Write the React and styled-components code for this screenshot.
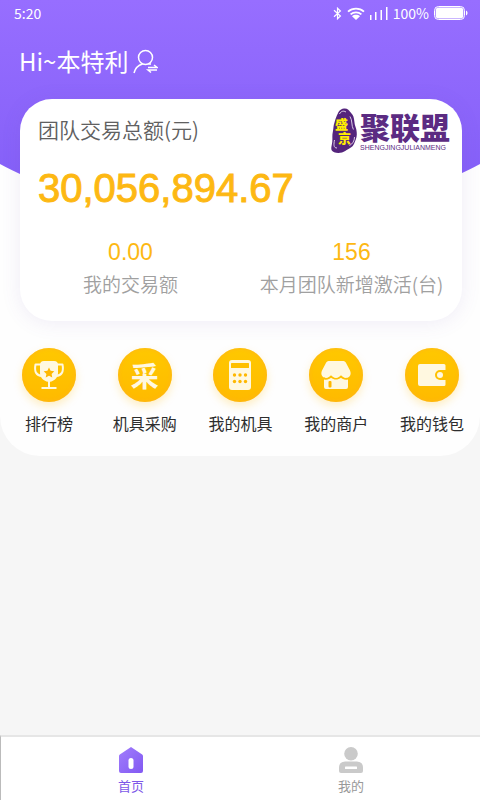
import React from 'react'
import styled, { createGlobalStyle } from 'styled-components'

const GlobalStyle = createGlobalStyle`
  * {
    box-sizing: border-box;
  }

  body {
    margin: 0;
    background: #f6f6f6;
    font-family: "Noto Sans CJK SC", "Noto Sans", sans-serif;
  }
`

const Page = styled.div`
  display: flex;
  flex-direction: column;
  min-height: 100vh;
`

const Panel = styled.div`
  position: relative;
  background: #fefefe;
  border-radius: 0 0 40px 40px;
  padding-bottom: 20px;
`

const Backdrop = styled.div`
  position: absolute;
  top: 0;
  left: 0;
  right: 0;
  height: 220px;
  background: linear-gradient(#976eff, #8560f8 180px);
  clip-path: ellipse(75% 100% at 50% 0);
`

const StatusBar = styled.div`
  position: relative;
  display: flex;
  align-items: center;
  justify-content: space-between;
  height: 26px;
  padding: 0 12px 0 14px;
  color: #fff;
  font-size: 14px;
`

const StatusIcons = styled.div`
  display: flex;
  align-items: center;
  gap: 5px;
`

const Header = styled.header`
  position: relative;
  display: flex;
  align-items: center;
  gap: 5px;
  height: 70px;
  padding: 0 19px;
  color: #fff;
`

const Greeting = styled.h1`
  margin: 0;
  font-size: 24px;
  font-weight: 400;
  line-height: 36px;
`

const IconButton = styled.button`
  display: flex;
  padding: 0;
  border: 0;
  background: none;
  color: inherit;
  cursor: pointer;
`

const Card = styled.section`
  position: relative;
  margin: 3px 18px 0 20px;
  padding: 9px 0 23px;
  border-radius: 32px;
  background: #fff;
  box-shadow: 0 2px 20px rgba(110, 80, 180, 0.1);
`

const CardTop = styled.div`
  display: flex;
  align-items: flex-start;
  justify-content: space-between;
  padding: 0 12px 0 18px;
`

const Total = styled.div`
  padding-top: 6px;
`

const TotalLabel = styled.div`
  color: #606060;
  font-size: 21px;
  font-weight: 350;
  line-height: 30px;
`

const Amount = styled.div`
  margin-top: 20px;
  color: #fdb813;
  font-family: "Liberation Sans", Arial, sans-serif;
  font-size: 40px;
  line-height: 48px;
  white-space: nowrap;
  -webkit-text-stroke: 1px #fdb813;
`

const Brand = styled.div`
  display: flex;
  gap: 2px;
`

const BrandName = styled.div`
  font-size: 30px;
  font-weight: 900;
  line-height: 36px;
  white-space: nowrap;
`

const BrandText = styled.div`
  color: #5b2b82;
`

const BrandLatin = styled.div`
  font-family: "Liberation Sans", Arial, sans-serif;
  font-size: 7px;
  line-height: 8px;
  white-space: nowrap;
`

const Stats = styled.div`
  display: grid;
  grid-template-columns: 1fr 1fr;
  margin-top: 26px;
  text-align: center;
`

const StatValue = styled.div`
  color: #fdb813;
  font-family: "Liberation Sans", Arial, sans-serif;
  font-size: 23px;
  line-height: 28px;
`

const StatLabel = styled.div`
  margin-top: 4px;
  color: #a0a0a0;
  font-size: 19px;
  font-weight: 350;
  line-height: 28px;
  white-space: nowrap;
`

const Menu = styled.nav`
  position: relative;
  display: grid;
  grid-template-columns: repeat(5, 1fr);
  margin-top: 27px;
  padding-left: 1px;
`

const MenuItem = styled.a`
  display: flex;
  flex-direction: column;
  align-items: center;
  gap: 8px;
  color: #2d2d2d;
  font-size: 16px;
  line-height: 26px;
  text-decoration: none;
  white-space: nowrap;
`

const Disc = styled.span`
  display: flex;
  align-items: center;
  justify-content: center;
  width: 54px;
  height: 54px;
  border-radius: 50%;
  background: linear-gradient(#ffc800, #ffba00);
  box-shadow: 0 4px 8px rgba(255, 190, 20, 0.25), inset 0 0 4px #ffb31c;
  color: #fff8e0;
`

const DiscGlyph = styled.span`
  font-size: 28px;
  font-weight: 700;
  line-height: 28px;
`

const TabBar = styled.nav`
  display: grid;
  grid-template-columns: 1fr 1fr;
  height: 65px;
  margin-top: auto;
  padding: 0 19px 0 20px;
  border-top: 2px solid #e6e6e6;
  border-left: 1px solid #bbb;
  background: #fff;
`

const Tab = styled.a`
  display: flex;
  flex-direction: column;
  align-items: center;
  gap: 3px;
  padding-top: 10px;
  color: ${(props) => (props.$active ? '#7d58e8' : '#999')};
  font-size: 13px;
  line-height: 20px;
  text-decoration: none;
`

const BluetoothIcon = () => (
  <svg width="9" height="13" viewBox="0 0 9 13" fill="none" stroke="currentColor" strokeWidth="1.2">
    <path d="M1 3.2 7.400 9 4.500 11.800V1.200L7.400 4 1 9.800" />
  </svg>
)

const WifiIcon = () => (
  <svg width="18" height="13" viewBox="0 0 18 13" fill="none" stroke="currentColor" strokeWidth="1.8">
    <path d="M1 4.6C5.6.5 12.4.5 17 4.6" />
    <path d="M3.600 7.400c3.100-2.800 7.700-2.800 10.800 0" />
    <path d="M5 9.200c2.200-1.900 5.800-1.900 8 0L9 13Z" fill="currentColor" stroke="none" />
  </svg>
)

const SignalIcon = () => (
  <svg width="18" height="13" viewBox="0 0 18 13" fill="currentColor">
    <rect x="0" y="8" width="1.500" height="5" />
    <rect x="5" y="5" width="1.500" height="8" />
    <rect x="10.500" y="3" width="1.500" height="10" />
    <rect x="16" y="0" width="1.500" height="13" />
  </svg>
)

const BatteryIcon = () => (
  <svg width="34" height="14" viewBox="0 0 34 14">
    <rect x="0.500" y="0.500" width="30" height="13" rx="4" fill="none" stroke="currentColor" />
    <rect x="1.700" y="1.500" width="27.600" height="11" rx="3" fill="currentColor" />
    <path d="M32 4.500c2 .8 2 4.200 0 5Z" fill="currentColor" />
  </svg>
)

const SwitchUserIcon = () => (
  <svg width="25" height="25" viewBox="0 0 25 25" fill="none" stroke="currentColor" strokeWidth="1.500">
    <circle cx="12.500" cy="8.500" r="7" />
    <path d="M1 24C2.200 19.200 5.200 16.200 9.500 15M15.500 15h2.500" />
    <path d="M15 18.500h9l-3-2.500M24 21h-9l3 2.500" />
  </svg>
)

const SealLogo = () => (
  <svg width="28" height="48" viewBox="0 0 28 48">
    <path
      d="M14 .5C17 0 19 2 21.500 5.500c2.500 3 2.500 5 3 9 .3 4 2.500 6 2.300 12-.1 4-1.400 5.500-2.600 9-2 4.500-5 4.500-9 7.500-4 2.800-12 2.500-13.700-1-.7-2.500.5-5 .8-8.500.4-3.500-.4-6 .6-10 .7-3.200.4-6 1.600-9C6 9.500 6.500 8 8.500 4 10 1.800 12 .8 14 .5Z"
      fill="#54247c"
    />
    <path d="M9.500 6c1.500-3 4-3.500 6.500-2M20 8.500c2.600 4 1.200 9 3.400 13M4.500 32c-.7 4-1.300 8 2.500 8M24.500 29c0 4-2 7-5 8.500" fill="none" stroke="#e8dff0" strokeWidth="0.900" />
    <text x="5" y="21" fontSize="13" fontWeight="900" fill="#ffed00">盛</text>
    <text x="8" y="35" fontSize="13" fontWeight="900" fill="#ffed00">京</text>
  </svg>
)

const TrophyIcon = () => (
  <svg width="32" height="30" viewBox="0 0 32 30">
    <path d="M8 4.500H2.500C1 12 3.500 15.500 9 16M24 4.500h5.500C31 12 28.500 15.500 23 16" fill="none" stroke="currentColor" strokeWidth="2" strokeLinejoin="round" />
    <path d="M11 1h10q4 0 4 4v8c0 5-4 8-8 8.800V27h6.500v2h-15v-2H15v-5.200C11 21 7 18 7 13V5q0-4 4-4Z" fill="currentColor" />
    <path d="m16 7.500 1.600 3.300 3.700.5-2.700 2.600.7 3.600-3.300-1.700-3.300 1.700.7-3.600-2.700-2.600 3.700-.5Z" fill="#ffb800" />
  </svg>
)

const TerminalIcon = () => (
  <svg width="22" height="30" viewBox="0 0 22 30">
    <rect width="22" height="30" rx="3" fill="currentColor" />
    <rect x="2" y="3" width="18" height="5" rx="0.500" fill="#ffc000" />
    {[15, 21.5].map((y) =>
      [5.5, 11, 16.5].map((x) => <circle key={`${x}-${y}`} cx={x} cy={y} r="1.700" fill="#ffb800" />)
    )}
  </svg>
)

const ShopIcon = () => (
  <svg width="30" height="30" viewBox="0 0 30 30">
    <path d="M7.500 1h15q1.500 0 2.300 1.500L29 10.500C31 15 28 18 25 18c-2.300 0-3.500-1.500-5-2.700-1.500 1.200-2.700 2.700-5 2.700s-3.500-1.500-5-2.700C8.500 16.500 7.300 18 5 18c-3 0-6-3-4-7.500l4.200-8Q6 1 7.500 1Z" fill="currentColor" />
    <path d="M3 19.500c3.500.8 5.500-.4 7-1.700 3 2.400 7 2.400 10 0 1.500 1.300 3.500 2.500 7 1.700V27q0 2-2 2H5q-2 0-2-2Z" fill="currentColor" />
    <rect x="7.500" y="21" width="3" height="6.500" rx="1" fill="#ffb800" />
  </svg>
)

const WalletIcon = () => (
  <svg width="28" height="22" viewBox="0 0 28 22">
    <path d="M2 0h24q1.500 0 1.500 1.500V6H22a5 5 0 0 0 0 10h5.500v4.500Q27.500 22 26 22H2q-2 0-2-2V2q0-2 2-2Z" fill="currentColor" />
    <circle cx="22" cy="11" r="3" fill="currentColor" />
  </svg>
)

const HomeIcon = () => (
  <svg width="24" height="26" viewBox="0 0 24 26">
    <defs>
      <linearGradient id="home" x1="0" y1="0" x2="1" y2="1">
        <stop offset="0" stopColor="#a17dfc" />
        <stop offset="1" stopColor="#8259f2" />
      </linearGradient>
    </defs>
    <path d="M12 0 23.200 7.500Q24 8 24 9v15q0 2-2 2H2q-2 0-2-2V9q0-1 .8-1.500Z" fill="url(#home)" />
    <rect x="9.500" y="11" width="5" height="11" rx="2.500" fill="#fff" />
  </svg>
)

const UserIcon = () => (
  <svg width="24" height="26" viewBox="0 0 24 26">
    <circle cx="12" cy="6.800" r="6.800" fill="#cacaca" />
    <path d="M6 14.500h12q6 0 6 6.500v3q0 2-2 2H2q-2 0-2-2v-3q0-6.500 6-6.500Z" fill="#cacaca" />
    <rect x="6" y="19.500" width="12" height="2.500" rx="0.500" fill="#fff" />
  </svg>
)

const stats = [
  { value: '0.00', label: '我的交易额' },
  { value: '156', label: '本月团队新增激活(台)' },
]

const menu = [
  { label: '排行榜', icon: <TrophyIcon /> },
  { label: '机具采购', icon: <DiscGlyph aria-hidden="true">采</DiscGlyph> },
  { label: '我的机具', icon: <TerminalIcon /> },
  { label: '我的商户', icon: <ShopIcon /> },
  { label: '我的钱包', icon: <WalletIcon /> },
]

function App() {
  return (
    <Page>
      <GlobalStyle />
      <Panel>
        <Backdrop />
        <StatusBar>
          <span>5:20</span>
          <StatusIcons>
            <BluetoothIcon />
            <WifiIcon />
            <SignalIcon />
            <span>100%</span>
            <BatteryIcon />
          </StatusIcons>
        </StatusBar>
        <Header>
          <Greeting>Hi~本特利</Greeting>
          <IconButton aria-label="切换账号">
            <SwitchUserIcon />
          </IconButton>
        </Header>
        <Card>
          <CardTop>
            <Total>
              <TotalLabel>团队交易总额(元)</TotalLabel>
              <Amount>30,056,894.67</Amount>
            </Total>
            <Brand>
              <SealLogo />
              <BrandText>
                <BrandName>聚联盟</BrandName>
                <BrandLatin>SHENGJINGJULIANMENG</BrandLatin>
              </BrandText>
            </Brand>
          </CardTop>
          <Stats>
            {stats.map((stat) => (
              <div key={stat.label}>
                <StatValue>{stat.value}</StatValue>
                <StatLabel>{stat.label}</StatLabel>
              </div>
            ))}
          </Stats>
        </Card>
        <Menu>
          {menu.map((item) => (
            <MenuItem key={item.label} href="#">
              <Disc>{item.icon}</Disc>
              {item.label}
            </MenuItem>
          ))}
        </Menu>
      </Panel>
      <TabBar>
        <Tab href="#" $active>
          <HomeIcon />
          首页
        </Tab>
        <Tab href="#">
          <UserIcon />
          我的
        </Tab>
      </TabBar>
    </Page>
  )
}

export default App
